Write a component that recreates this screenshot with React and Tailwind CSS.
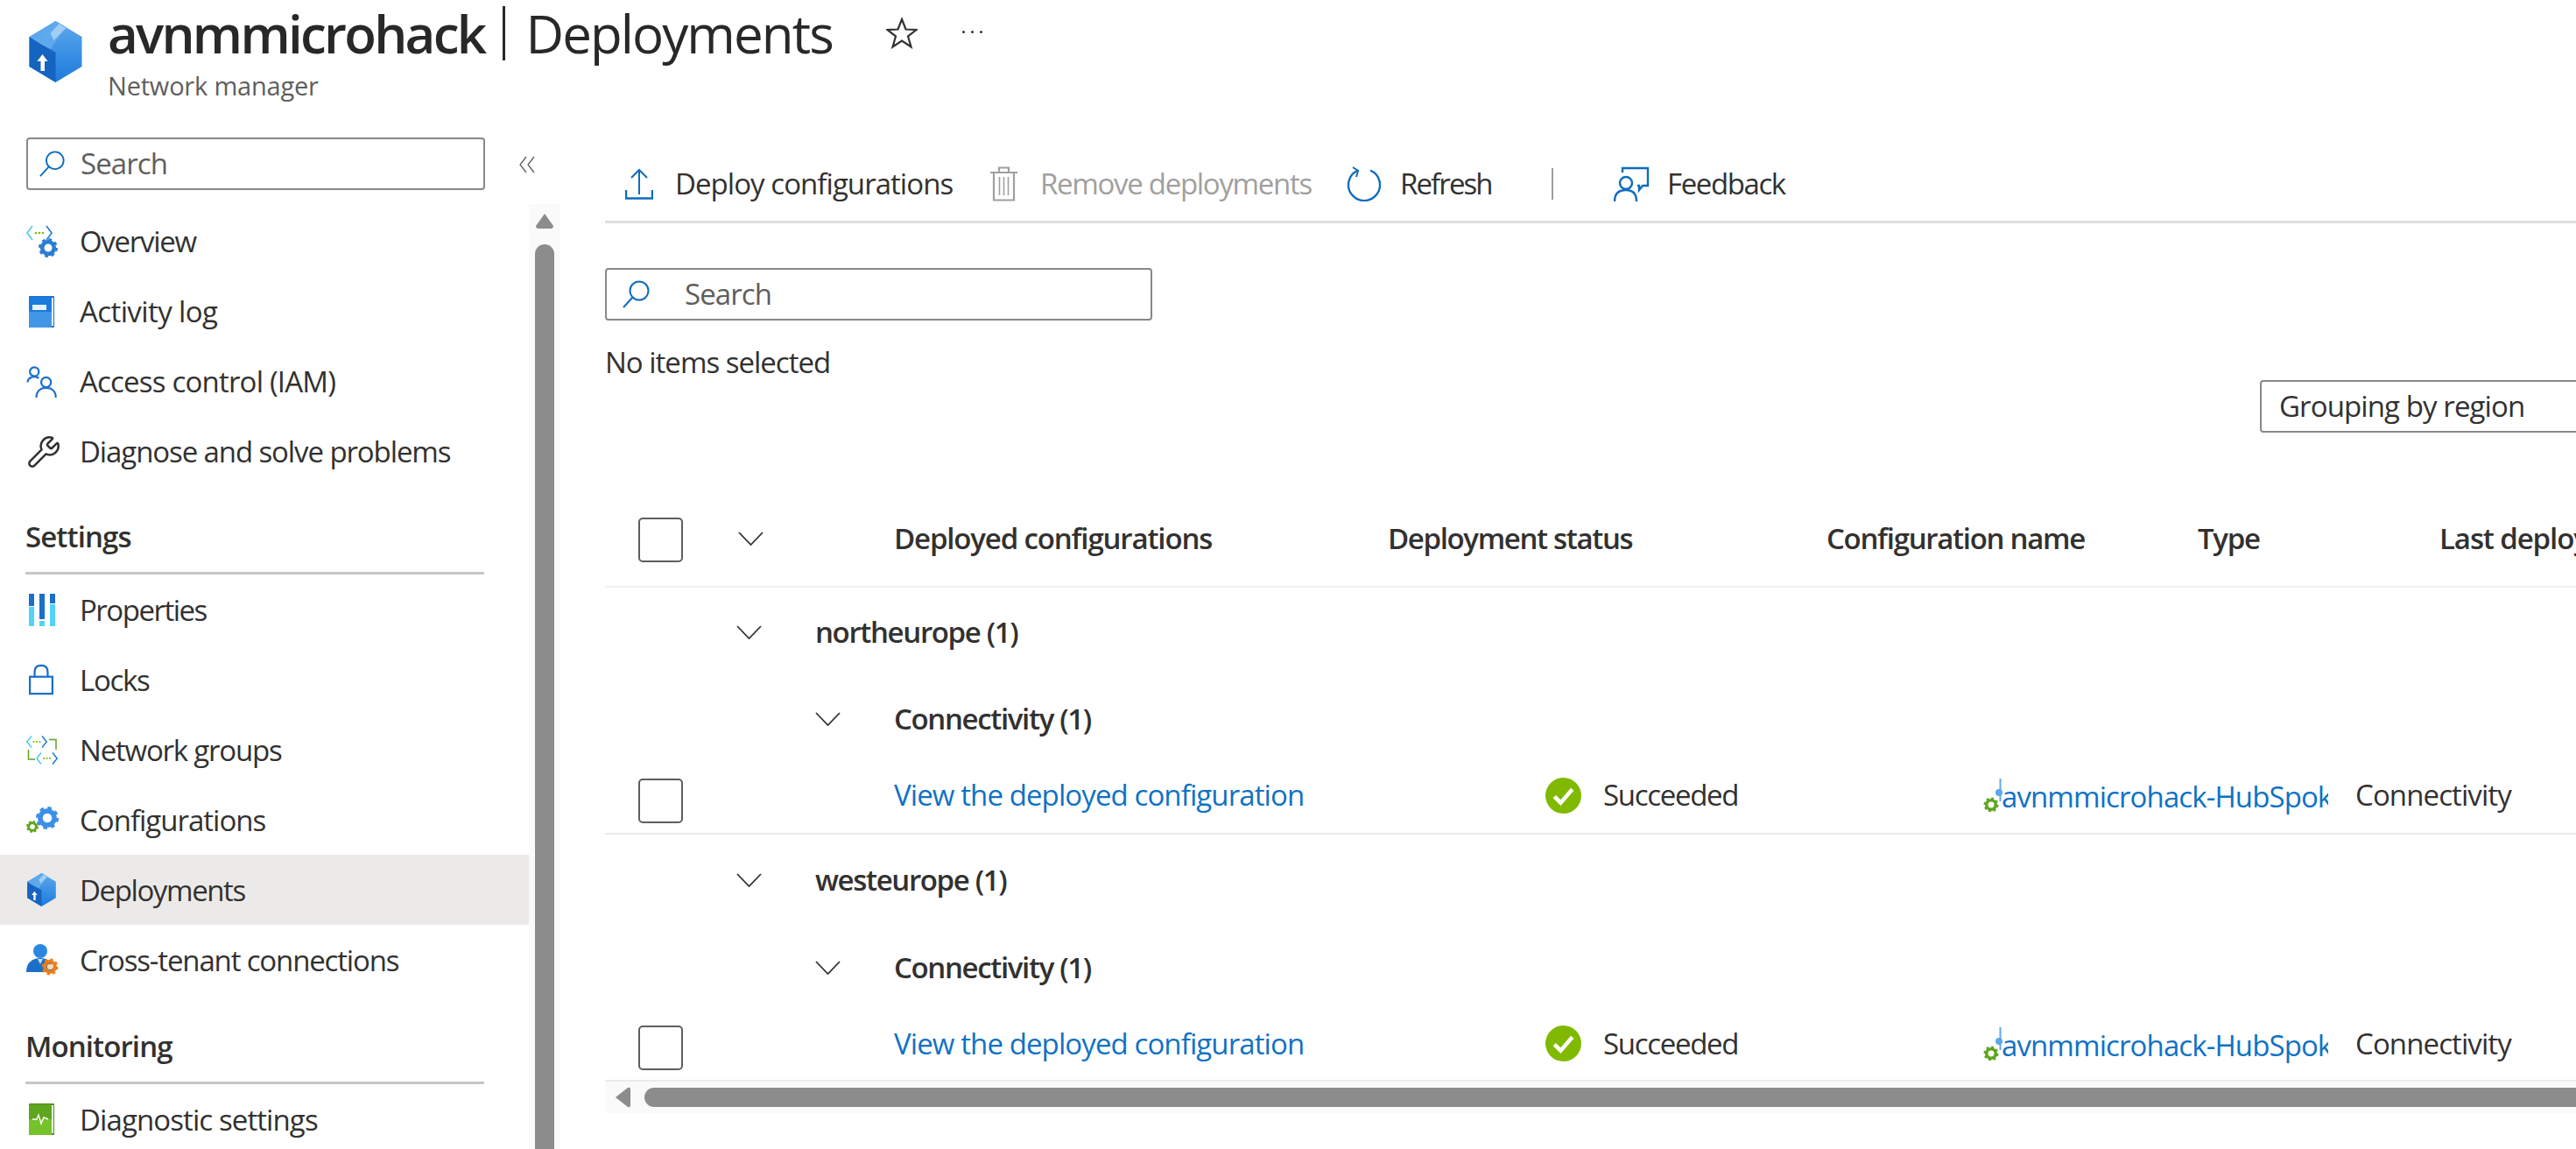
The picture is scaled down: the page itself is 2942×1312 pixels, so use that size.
import React from "react";
import { Wrench } from "lucide-react";

function Gear({ cx, cy, r, fill, hole = "#fff" }) {
  const sw = r * 0.42;
  const c = 2 * Math.PI * (r - sw / 2);
  return (
    <g>
      <circle cx={cx} cy={cy} r={r - sw / 2} fill="none" stroke={fill} strokeWidth={sw} strokeDasharray={`${c / 16} ${c / 16}`} />
      <circle cx={cx} cy={cy} r={r * 0.62} fill="none" stroke={fill} strokeWidth={r * 0.42} />
      <circle cx={cx} cy={cy} r={r * 0.34} fill={hole} />
    </g>
  );
}

function Cube({ className }) {
  return (
    <svg viewBox="0 0 60 70" className={className}>
      <defs>
        <linearGradient id="cubeR" x1="0" y1="0" x2="0" y2="1">
          <stop offset="0" stopColor="#5ea8ec" />
          <stop offset="1" stopColor="#1b7bdc" />
        </linearGradient>
      </defs>
      <polygon points="30,0 60,18 60,52 30,70 0,52 0,18" fill="url(#cubeR)" />
      <polygon points="0,18 30,36 30,70 0,52" fill="#1564c0" />
      <polygon points="0,18 14,10 14,27" fill="#5ea8ec" />
      <polygon points="14,10 30,0 42,7 24,32 14,27" fill="#5ea8ec" />
      <polygon points="24,14 34,3 42,8 28,22" fill="#9fcdf3" />
      <path d="M15 38 L21 46 H17.5 V57 H13 V46 H9 Z" fill="#fff" />
    </svg>
  );
}

function OverviewIcon() {
  return (
    <svg viewBox="0 0 36 38" className="w-[36px] h-[38px]">
      <path d="M7 1 L1 9 L7 17" fill="none" stroke="#50c8f0" strokeWidth="1.6" />
      <path d="M23 1 L29 9 L23 17" fill="none" stroke="#1b7bdc" strokeWidth="1.6" />
      <circle cx="11" cy="9" r="1.3" fill="#7fba00" />
      <circle cx="15" cy="9" r="1.3" fill="#7fba00" />
      <circle cx="19" cy="9" r="1.3" fill="#7fba00" />
      <Gear cx={25} cy={26} r={11} fill="#2b7cd3" />
    </svg>
  );
}

function BookIcon({ from, to, edge, children }) {
  return (
    <svg viewBox="0 0 30 36" className="w-[30px] h-[36px]">
      <rect x="0" y="0" width="29" height="36" rx="1" fill={edge} />
      <rect x="0" y="1" width="26" height="35" fill={from} />
      <rect x="0" y="18" width="26" height="18" fill={to} opacity="0.6" />
      <rect x="26" y="2" width="2" height="32" fill="#fff" />
      {children}
    </svg>
  );
}

function AccessIcon() {
  return (
    <svg viewBox="0 0 38 40" className="w-[36px] h-[37px]" fill="none" stroke="#1b6fc8" strokeWidth="2.4">
      <circle cx="9.5" cy="7" r="5.5" />
      <path d="M1 20 C2 14 6 13 10 13 C12 13 14 14 15 15" />
      <circle cx="24" cy="20" r="6" />
      <path d="M12 39 C12 31 17 27 24 27 C31 27 36 31 36 39" />
    </svg>
  );
}

function PropsIcon() {
  return (
    <svg viewBox="0 0 30 37" className="w-[30px] h-[37px]">
      <rect x="0" y="0" width="6" height="14" fill="#1b6fc8" />
      <rect x="0" y="15" width="6" height="22" fill="#50d4f5" />
      <rect x="12" y="0" width="6" height="29" fill="#1b6fc8" />
      <rect x="12" y="31" width="6" height="6" fill="#50d4f5" />
      <rect x="24" y="0" width="6" height="11" fill="#1b6fc8" />
      <rect x="24" y="12" width="6" height="25" fill="#50d4f5" />
    </svg>
  );
}

function LockIcon() {
  return (
    <svg viewBox="0 0 30 37" className="w-[28px] h-[36px]" fill="none" stroke="#1b6fc8" strokeWidth="2.4">
      <rect x="1.2" y="15" width="27.6" height="20.8" />
      <path d="M7 15 V9 C7 3.5 10 1.2 15 1.2 C20 1.2 23 3.5 23 9 V15" />
    </svg>
  );
}

function NetGroupsIcon() {
  return (
    <svg viewBox="0 0 36 33" className="w-[36px] h-[33px]" fill="none" strokeWidth="1.5">
      <path d="M6 0.5 L0.8 7 L6 13.5" stroke="#50c8f0" />
      <path d="M18 0.5 L23.2 7 L18 13.5" stroke="#1b7bdc" />
      <path d="M17 19.5 L12 26 L17 32.5" stroke="#50c8f0" />
      <path d="M30 19.5 L35.2 26 L30 32.5" stroke="#1b7bdc" />
      <path d="M26 4.5 H34 V16" stroke="#5ea520" />
      <path d="M2.5 16 V27 H10" stroke="#5ea520" />
      <g fill="#7fba00" stroke="none">
        <circle cx="8.5" cy="7" r="1.1" /><circle cx="12" cy="7" r="1.1" /><circle cx="15.5" cy="7" r="1.1" />
        <circle cx="20" cy="26" r="1.1" /><circle cx="23.5" cy="26" r="1.1" /><circle cx="27" cy="26" r="1.1" />
      </g>
    </svg>
  );
}

function ConfigIcon() {
  return (
    <svg viewBox="0 0 37 30" className="w-[37px] h-[30px]">
      <Gear cx={24} cy={13} r={13} fill="#3b8fe8" />
      <Gear cx={7} cy={23} r={7} fill="#5ea520" />
    </svg>
  );
}

function PersonIcon() {
  return (
    <svg viewBox="0 0 37 36" className="w-[37px] h-[36px]">
      <circle cx="16" cy="8" r="8" fill="#2b88e0" />
      <path d="M0 32 C0 21 7 16 16 16 C25 16 31 21 31 32 Z" fill="#1b6fc8" />
      <path d="M13 17 L16 23 L19 17 Z" fill="#bfe0fa" />
      <Gear cx={27} cy={26} r={9.5} fill="#f07d14" hole="#ffd9a8" />
    </svg>
  );
}

function SearchIcon({ className }) {
  return (
    <svg viewBox="0 0 32 32" className={className} fill="none" stroke="#0f6cbd" strokeWidth="2">
      <circle cx="19" cy="12" r="10.5" />
      <path d="M11.5 19.5 L1 31" />
    </svg>
  );
}

function Chevron({ className = "w-[29px] h-[16px]" }) {
  return (
    <svg viewBox="0 0 29 16" className={className} fill="none" stroke="#323130" strokeWidth="1.8">
      <path d="M1 1 L14.5 15 L28 1" />
    </svg>
  );
}

function Checkbox({ className = "" }) {
  return <div className={`w-[51px] h-[51px] shrink-0 rounded-[5px] border-2 border-[#605e5c] bg-white ${className}`} />;
}

function StatusOk() {
  return (
    <svg viewBox="0 0 40 40" className="w-[41px] h-[41px] shrink-0">
      <circle cx="20" cy="20" r="20" fill="#7fba00" />
      <path d="M10 21 L17 28 L30 13" fill="none" stroke="#fff" strokeWidth="4.5" />
    </svg>
  );
}

function ConfigLinkIcon() {
  return (
    <svg viewBox="0 0 22 38" className="w-[22px] h-[38px] shrink-0">
      <circle cx="18" cy="16" r="4" fill="#5ea8ec" />
      <rect x="18.5" y="0" width="2" height="26" fill="#5ea8ec" />
      <Gear cx={9} cy={30} r={8.5} fill="#5ea520" />
    </svg>
  );
}

function NavItem({ icon, label, active, track = "tracking-[-1px]", nudge = "mt-[1px]" }) {
  return (
    <div className={`h-[80px] w-[604px] flex items-center ${active ? "bg-[#ebeae8]" : ""}`}>
      <div className="w-[91px] pl-[30px] flex items-center shrink-0">{icon}</div>
      <span className={`text-[33px] ${track} ${nudge} text-[#323130] whitespace-nowrap`}>{label}</span>
    </div>
  );
}

function SectionHead({ label, h }) {
  return (
    <div className={`${h} w-[604px] pl-[29px] flex flex-col justify-end`}>
      <div className="text-[33px] tracking-[-0.9px] font-semibold text-[#323130] leading-[40px] pb-[20px]">{label}</div>
      <div className="w-[524px] h-[3px] bg-[#c8c6c4]" />
    </div>
  );
}

function Tool({ icon, label, disabled, gap, width, track }) {
  return (
    <div className={`flex items-center shrink-0 ${width}`}>
      {icon}
      <span className={`${gap} text-[33px] ${track} whitespace-nowrap ${disabled ? "text-[#a19f9d]" : "text-[#323130]"}`}>{label}</span>
    </div>
  );
}

function GroupRow({ chevronCol, label, h }) {
  return (
    <div className={`${h} flex items-center`}>
      <div className={`${chevronCol} shrink-0 flex justify-start`}><Chevron /></div>
      <span className="text-[33px] tracking-[-1.35px] font-semibold text-[#323130] whitespace-nowrap">{label}</span>
    </div>
  );
}

function DataRow({ h, boxOffset }) {
  return (
    <div className={`${h} pb-[4px] flex items-center border-b-2 border-[#edebe9] whitespace-nowrap overflow-hidden`}>
      <div className="w-[330px] pl-[38px] shrink-0"><Checkbox className={boxOffset} /></div>
      <div className="w-[744px] shrink-0 text-[33px] tracking-[-0.9px] text-[#0f72c4]">View the deployed configuration</div>
      <div className="w-[500px] shrink-0 flex items-center">
        <StatusOk />
        <span className="ml-[25px] text-[33px] tracking-[-1.3px] text-[#323130]">Succeeded</span>
      </div>
      <div className="w-[425px] shrink-0 flex items-center">
        <ConfigLinkIcon />
        <div className="w-[373px] -ml-[1px] overflow-hidden text-[33px] tracking-[-0.9px] text-[#0f72c4] mt-[4px]">avnmmicrohack-HubSpoke</div>
      </div>
      <div className="text-[33px] tracking-[-0.9px] text-[#323130]">Connectivity</div>
    </div>
  );
}

export default function App() {
  return (
    <div className="w-[2942px] h-[1312px] overflow-hidden bg-white font-['Open_Sans',sans-serif] text-[#323130]">
      <header className="h-[150px] flex pl-[33px] items-start">
        <Cube className="w-[61px] h-[70px] mt-[24px] shrink-0" />
        <div className="ml-[29px]">
          <div className="flex items-center h-[76px] whitespace-nowrap">
            <span className="text-[60px] font-semibold tracking-[-2.7px] text-[#292827] leading-[76px]">avnmmicrohack</span>
            <span className="ml-[20px] w-[3px] h-[62px] bg-[#292827]" />
            <span className="ml-[24px] text-[60px] tracking-[-1.9px] text-[#292827] leading-[76px]">Deployments</span>
            <svg viewBox="0 0 36 36" className="ml-[61px] w-[36px] h-[36px]" fill="none" stroke="#323130" strokeWidth="2.2">
              <path d="M18 2 L22.5 13.5 L34.5 14 L25 21.5 L28.5 33.5 L18 26.5 L7.5 33.5 L11 21.5 L1.5 14 L13.5 13.5 Z" />
            </svg>
            <div className="ml-[51px] flex gap-[7px] mb-[4px]">
              <span className="w-[3px] h-[3px] bg-[#323130] rounded-full" />
              <span className="w-[3px] h-[3px] bg-[#323130] rounded-full" />
              <span className="w-[3px] h-[3px] bg-[#323130] rounded-full" />
            </div>
          </div>
          <div className="text-[29px] tracking-[-0.2px] text-[#605e5c] leading-[40px] mt-[2px]">Network manager</div>
        </div>
      </header>

      <div className="flex h-[1162px]">
        <aside className="w-[691px] shrink-0 flex flex-col">
          <div className="flex pl-[30px] pt-[7px] h-[86px] shrink-0 items-start">
            <div className="w-[524px] h-[60px] rounded-[4px] border-2 border-[#8a8886] flex items-center pl-[13px]">
              <SearchIcon className="w-[30px] h-[32px]" />
              <span className="ml-[17px] text-[33px] tracking-[-0.9px] text-[#605e5c]">Search</span>
            </div>
            <svg viewBox="0 0 20 20" className="ml-[38px] mt-[21px] w-[20px] h-[20px]" fill="none" stroke="#605e5c" strokeWidth="1.3">
              <path d="M9 1 L2 10 L9 19 M18 1 L11 10 L18 19" />
            </svg>
          </div>
          <div className="flex flex-1 min-h-0">
            <nav className="w-[604px] shrink-0">
              <NavItem icon={<OverviewIcon />} label="Overview" track="tracking-[-1.3px]" nudge="" />
              <NavItem
                icon={
                  <div className="pl-[3px]">
                    <BookIcon from="#1b7bdc" to="#5ea8ec" edge="#1b6fc8">
                      <rect x="4" y="10" width="16" height="6" fill="#e8f3fc" />
                    </BookIcon>
                  </div>
                }
                label="Activity log"
                track="tracking-[-0.6px]"
                nudge=""
              />
              <NavItem icon={<AccessIcon />} label="Access control (IAM)" track="tracking-[-0.8px]" nudge="" />
              <NavItem icon={<Wrench className="w-[40px] h-[40px] text-[#323130]" strokeWidth={1.5} />} label="Diagnose and solve problems" track="tracking-[-1.1px]" nudge="" />
              <SectionHead label="Settings" h="h-[100px]" />
              <NavItem icon={<div className="pl-[3px]"><PropsIcon /></div>} label="Properties" track="tracking-[-1.5px]" />
              <NavItem icon={<div className="pl-[3px]"><LockIcon /></div>} label="Locks" track="tracking-[-1.3px]" />
              <NavItem icon={<NetGroupsIcon />} label="Network groups" track="tracking-[-1.2px]" />
              <NavItem icon={<ConfigIcon />} label="Configurations" track="tracking-[-1px]" />
              <NavItem icon={<Cube className="w-[33px] h-[38px] ml-[1px]" />} label="Deployments" active track="tracking-[-1.4px]" />
              <NavItem icon={<PersonIcon />} label="Cross-tenant connections" track="tracking-[-1.15px]" />
              <SectionHead label="Monitoring" h="h-[102px]" />
              <NavItem
                icon={
                  <div className="pl-[3px]">
                    <BookIcon from="#5ea520" to="#86d633" edge="#4c8c18">
                      <path d="M4 18 H9 L11 13 L14 23 L17 16 L22 18" fill="none" stroke="#fff" strokeWidth="1.4" />
                    </BookIcon>
                  </div>
                }
                label="Diagnostic settings"
                track="tracking-[-0.9px]"
              />
            </nav>
            <div className="w-[36px] shrink-0 -mt-[3px] bg-[#fafafa] flex flex-col items-center">
              <svg viewBox="0 0 22 18" className="w-[22px] h-[18px] mt-[10px]">
                <path d="M11 1 L21 15 Q21 18 18 18 H4 Q1 18 1 15 Z" fill="#8c8c8c" />
              </svg>
              <div className="w-[22px] flex-1 mt-[18px] rounded-t-[11px] bg-[#8c8c8c]" />
            </div>
          </div>
        </aside>

        <main className="flex-1 min-w-0 overflow-hidden">
          <div className="h-[105px] border-b-[3px] border-[#e1dfdd] pl-[23px] flex items-center pt-[17px]">
            <Tool
              width="w-[417px]"
              gap="ml-[25px]"
              track="tracking-[-0.95px]"
              label="Deploy configurations"
              icon={
                <svg viewBox="0 0 32 36" className="w-[32px] h-[36px] shrink-0" fill="none" stroke="#0f6cbd" strokeWidth="2">
                  <path d="M16 30 V2 M7 11 L16 2 L25 11" />
                  <path d="M1 25 V34.5 H31 V25" strokeWidth="2.4" />
                </svg>
              }
            />
            <Tool
              width="w-[406px]"
              gap="ml-[26px]"
              track="tracking-[-1.3px]"
              label="Remove deployments"
              disabled
              icon={
                <svg viewBox="0 0 31 40" className="w-[31px] h-[40px] shrink-0" fill="none" stroke="#a19f9d" strokeWidth="2.2">
                  <path d="M0 7 H31 M10 7 V1.5 H21 V7 M4 7 V38.5 H27 V7" />
                  <path d="M10.5 12 V33 M15.5 12 V33 M20.5 12 V33" strokeWidth="1.6" />
                </svg>
              }
            />
            <Tool
              width="w-[235px]"
              gap="ml-[22px]"
              track="tracking-[-1.9px]"
              label="Refresh"
              icon={
                <svg viewBox="0 0 40 40" className="w-[40px] h-[40px] shrink-0" fill="none" stroke="#0f6cbd" strokeWidth="2.4">
                  <path d="M14 4.5 A18 18 0 1 0 28 4.5" />
                  <path d="M8 1 L14 5 L12 12" strokeWidth="2" />
                </svg>
              }
            />
            <div className="w-[2px] h-[36px] bg-[#a19f9d] shrink-0" />
            <div className="w-[69px] shrink-0" />
            <Tool
              gap="ml-[20px]"
              track="tracking-[-1.4px]"
              label="Feedback"
              icon={
                <svg viewBox="0 0 41 40" className="w-[41px] h-[40px] shrink-0" fill="none" stroke="#0f6cbd" strokeWidth="2.4">
                  <path d="M10 7 V2 H39 V22 H33 L29 27 V22 H27" />
                  <circle cx="14" cy="19" r="7" />
                  <path d="M1 40 C1 31 6 27 14 27 C22 27 26 31 26 40" />
                </svg>
              }
            />
          </div>

          <div className="mt-[51px] w-[625px] h-[60px] rounded-[4px] border-2 border-[#8a8886] flex items-center pl-[18px]">
            <SearchIcon className="w-[32px] h-[32px]" />
            <span className="ml-[39px] text-[33px] tracking-[-0.9px] text-[#605e5c]">Search</span>
          </div>

          <div className="mt-[28px] h-[40px] leading-[40px] text-[33px] tracking-[-1px] whitespace-nowrap">No items selected</div>

          <div className="ml-[1890px] w-[500px] h-[60px] rounded-[4px] border-2 border-[#8a8886] flex items-center pl-[20px]">
            <span className="text-[33px] tracking-[-0.9px] text-[#323130] whitespace-nowrap">Grouping by region</span>
          </div>

          <div className="mt-[69px] h-[108px] flex items-center border-b-2 border-[#f3f2f1] whitespace-nowrap overflow-hidden font-semibold text-[33px]">
            <div className="w-[152px] pl-[38px] shrink-0"><Checkbox /></div>
            <div className="w-[178px] shrink-0 mb-[2px]"><Chevron /></div>
            <div className="w-[564px] shrink-0 tracking-[-1.15px] mb-[2px]">Deployed configurations</div>
            <div className="w-[501px] shrink-0 tracking-[-1.35px] mb-[2px]">Deployment status</div>
            <div className="w-[424px] shrink-0 tracking-[-1.3px] mb-[2px]">Configuration name</div>
            <div className="w-[276px] shrink-0 tracking-[-1.3px] mb-[2px]">Type</div>
            <div className="shrink-0 tracking-[-1.1px] mb-[2px]">Last deployed</div>
          </div>

          <GroupRow chevronCol="ml-[150px] w-[90px]" label="northeurope (1)" h="h-[102px]" />
          <GroupRow chevronCol="ml-[240px] w-[90px]" label="Connectivity (1)" h="h-[96px]" />
          <DataRow h="h-[84px]" boxOffset="mt-[12px]" />
          <GroupRow chevronCol="ml-[150px] w-[90px]" label="westeurope (1)" h="h-[103px]" />
          <GroupRow chevronCol="ml-[240px] w-[90px]" label="Connectivity (1)" h="h-[98px]" />
          <DataRow h="h-[81px]" boxOffset="mt-[10px]" />

          <div className="h-[36px] bg-[#fafafa] flex items-center pl-[11px]">
            <svg viewBox="0 0 18 24" className="w-[18px] h-[24px] shrink-0">
              <path d="M1 12 L15 1 Q18 0 18 3 V21 Q18 24 15 23 Z" fill="#8c8c8c" />
            </svg>
            <div className="ml-[16px] flex-1 h-[22px] rounded-l-[11px] bg-[#8c8c8c]" />
          </div>
        </main>
      </div>
    </div>
  );
}
